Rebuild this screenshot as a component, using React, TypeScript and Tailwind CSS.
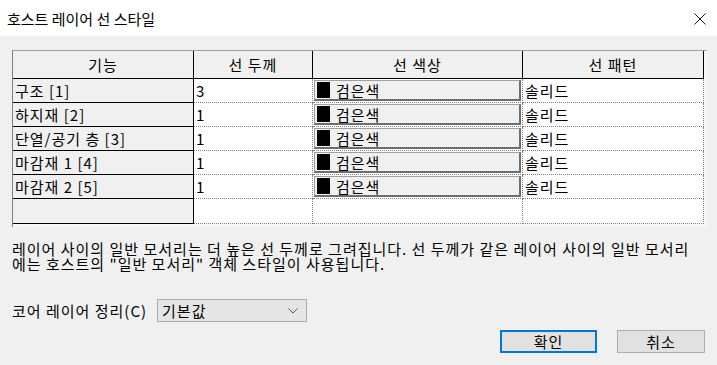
import React from 'react';

type Row = { name: string; width: string };

const rows: Row[] = [
  { name: '구조 [1]', width: '3' },
  { name: '하지재 [2]', width: '1' },
  { name: '단열/공기 층 [3]', width: '1' },
  { name: '마감재 1 [4]', width: '1' },
  { name: '마감재 2 [5]', width: '1' },
];

const headCell = 'flex h-[28px] items-center justify-center border-r border-b border-black bg-[#f0f0f0]';
const nameCell = 'flex h-6 items-center border-r border-b border-black bg-[#f0f0f0] pl-[2px]';
const dataCell = 'flex h-6 items-center border-r border-b border-dotted border-[#808080] bg-white pl-[2px]';

const App: React.FC = () => {
  return (
    <div className="h-[365px] w-[717px] overflow-hidden bg-[#f0f0f0] font-['Noto_Sans_CJK_KR',sans-serif] text-[15px] leading-none text-black">
      <div className="flex h-9 items-center justify-between bg-white pl-[7px] pr-[11px]">
        <span>호스트 레이어 선 스타일</span>
        <svg width="12" height="12" viewBox="0 0 12 12" className="mt-[1px]">
          <path d="M0.5 0.5 L11.5 11.5 M11.5 0.5 L0.5 11.5" stroke="#111" strokeWidth="1" />
        </svg>
      </div>

      <div className="px-3 pt-[14px] tracking-[1px]">
        <div className="w-[695px] border-t border-l border-t-[#a0a0a0] border-l-[#808080] bg-[#f7f7f7] pr-[3px] pb-[3px]">
          <div className="grid grid-cols-[181px_119px_210px_181px]">
            <div className={headCell}>기능</div>
            <div className={headCell}>선 두께</div>
            <div className={headCell}>선 색상</div>
            <div className={headCell}>선 패턴</div>

            {rows.map((r) => (
              <React.Fragment key={r.name}>
                <div className={nameCell}>{r.name}</div>
                <div className={dataCell}>{r.width}</div>
                <div className="flex h-6 items-stretch border-r border-b border-dotted border-[#808080] bg-white p-[1px]">
                  <div className="flex flex-1 items-center border border-[#a0a0a0] border-r-2 border-b-2 border-r-[#6d6d6d] border-b-[#6d6d6d] bg-[#f0f0f0] pl-[2px]">
                    <span className="h-4 w-[13px] bg-black" />
                    <span className="ml-[6px]">검은색</span>
                  </div>
                </div>
                <div className={dataCell}>솔리드</div>
              </React.Fragment>
            ))}

            <div className={`${nameCell} h-[25px]`} />
            <div className={`${dataCell} h-[25px]`} />
            <div className={`${dataCell} h-[25px]`} />
            <div className={`${dataCell} h-[25px]`} />
          </div>
        </div>

        <p className="mt-[14px] leading-[15px]">
          레이어 사이의 일반 모서리는 더 높은 선 두께로 그려집니다. 선 두께가 같은 레이어 사이의 일반 모서리
          <br />
          에는 호스트의 "일반 모서리" 객체 스타일이 사용됩니다.
        </p>

        <div className="mt-[28px] flex items-center">
          <span>코어 레이어 정리(C)</span>
          <div className="ml-[10px] flex h-[23px] w-[150px] items-center justify-between border border-[#adadad] bg-[#e5e5e5] pl-[4px] pr-[8px]">
            <span>기본값</span>
            <svg width="10" height="6" viewBox="0 0 10 6">
              <path d="M0.5 0.5 L5 5 L9.5 0.5" stroke="#555" strokeWidth="1" fill="none" />
            </svg>
          </div>
        </div>

        <div className="mt-[8px] flex justify-end gap-[20px]">
          <button type="button" className="flex h-[23px] w-[97px] items-center justify-center border-2 border-[#0078d7] bg-[#e1e1e1] tracking-[1px]">
            확인
          </button>
          <button type="button" className="flex h-[23px] w-[88px] items-center justify-center border border-[#adadad] bg-[#e1e1e1] tracking-[1px]">
            취소
          </button>
        </div>
      </div>
    </div>
  );
};

export default App;
